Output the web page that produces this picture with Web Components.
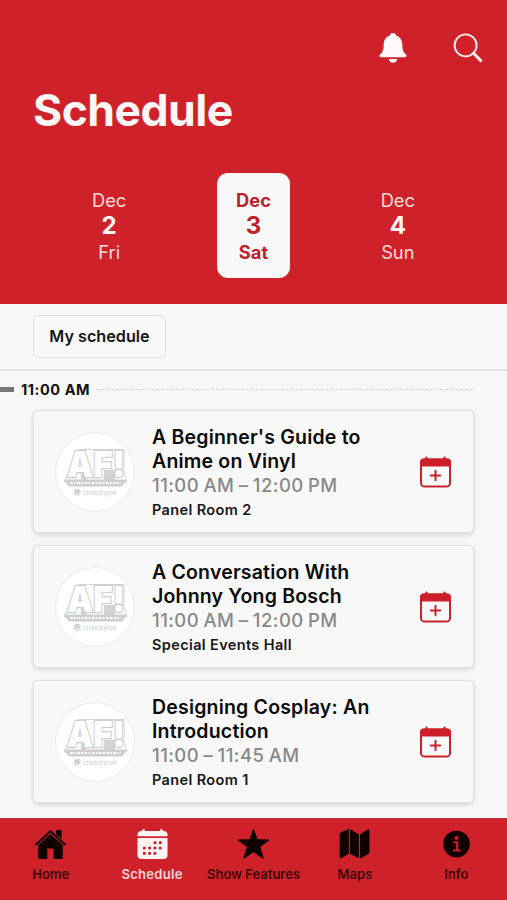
<!DOCTYPE html>
<html lang="en">
<head>
<meta charset="utf-8">
<meta name="viewport" content="width=device-width, initial-scale=1">
<title>Schedule</title>
<style>
  body {
    margin: 0;
    background: #f7f7f7;
    font-family: Inter, "Liberation Sans", sans-serif;
  }
</style>
</head>
<body>
<schedule-app>
  <app-header slot="header" label="Schedule">
    <day-tab month="Dec" date="2" day="Fri"></day-tab>
    <day-tab month="Dec" date="3" day="Sat" selected></day-tab>
    <day-tab month="Dec" date="4" day="Sun"></day-tab>
  </app-header>
  <filter-bar slot="filter">My schedule</filter-bar>
  <time-divider>11:00 AM</time-divider>
  <session-card>
    <span slot="title">A Beginner's Guide to<br>Anime on Vinyl</span>
    <span slot="time">11:00 AM – 12:00 PM</span>
    <span slot="room">Panel Room 2</span>
  </session-card>
  <session-card>
    <span slot="title">A Conversation With<br>Johnny Yong Bosch</span>
    <span slot="time">11:00 AM – 12:00 PM</span>
    <span slot="room">Special Events Hall</span>
  </session-card>
  <session-card>
    <span slot="title">Designing Cosplay: An<br>Introduction</span>
    <span slot="time">11:00 – 11:45 AM</span>
    <span slot="room">Panel Room 1</span>
  </session-card>
  <tab-bar slot="footer">
    <tab-item icon="home">Home</tab-item>
    <tab-item icon="schedule" selected>Schedule</tab-item>
    <tab-item icon="star">Show Features</tab-item>
    <tab-item icon="map">Maps</tab-item>
    <tab-item icon="info">Info</tab-item>
  </tab-bar>
</schedule-app>

<script>
const attach = (element, html) => {
  const template = document.createElement('template');
  template.innerHTML = html;
  element.attachShadow({ mode: 'open' }).appendChild(template.content.cloneNode(true));
  return element.shadowRoot;
};

class ScheduleApp extends HTMLElement {
  constructor() {
    super();
    attach(this, `
      <style>
        :host {
          display: flex;
          flex-direction: column;
          height: 100vh;
          overflow: hidden;
        }

        main {
          display: flex;
          flex: 1;
          flex-direction: column;
          gap: 12px;
          min-height: 0;
          overflow: hidden;
        }
      </style>
      <slot name="header"></slot>
      <slot name="filter"></slot>
      <main><slot></slot></main>
      <slot name="footer"></slot>
    `);
  }
}

class AppHeader extends HTMLElement {
  constructor() {
    super();
    const root = attach(this, `
      <style>
        :host {
          background: #cf2129;
          box-sizing: border-box;
          color: #fff6f6;
          display: flex;
          flex: none;
          flex-direction: column;
          height: 304px;
          padding-top: 28px;
        }

        .actions {
          display: flex;
          gap: 35px;
          height: 40px;
          justify-content: flex-end;
          padding-right: 19px;
        }

        h1 {
          font-size: 44.5px;
          font-weight: 700;
          letter-spacing: -0.5px;
          line-height: 52px;
          margin: 16px 0 0 33px;
        }

        nav {
          display: flex;
          margin-top: 37px;
          padding: 0 37px;
        }
      </style>
      <div class="actions">
        <svg width="40" height="40" viewBox="0 0 40 40" fill="#fff9f9">
          <path d="M20 5C18.2 5 17 6.1 17 7.4C12.9 8.7 10.8 12 10.7 16C10.6 22.5 9.5 24.4 7 26.6C6 27.6 6.5 29.3 8 29.3H32C33.5 29.3 34 27.6 33 26.6C30.5 24.4 29.4 22.5 29.3 16C29.2 12 27.1 8.7 23 7.4C23 6.1 21.8 5 20 5Z"/>
          <path d="M15.8 31H24.2C23.4 33.7 22 34.8 20 34.8S16.6 33.7 15.8 31Z"/>
        </svg>
        <svg width="40" height="40" viewBox="0 0 40 40" fill="none" stroke="#ffeeee" stroke-linecap="round">
          <circle cx="17.6" cy="17.4" r="11" stroke-width="1.9"/>
          <path d="M25.5 25.3L32.8 32.6" stroke-width="3"/>
        </svg>
      </div>
      <h1></h1>
      <nav><slot></slot></nav>
    `);
    root.querySelector('h1').textContent = this.getAttribute('label');
  }
}

class DayTab extends HTMLElement {
  constructor() {
    super();
    const root = attach(this, `
      <style>
        :host {
          display: flex;
          flex: 1;
          justify-content: center;
        }

        .day {
          align-items: center;
          border-radius: 11px;
          box-sizing: border-box;
          color: #ffdede;
          display: flex;
          flex-direction: column;
          font-size: 18.3px;
          height: 105px;
          line-height: 26px;
          padding-top: 14px;
          width: 73px;
        }

        .date {
          color: #fff6f6;
          font-size: 24px;
          font-weight: 700;
        }

        :host([selected]) .day {
          background: #f8f8f8;
          color: #bd222b;
          font-weight: 700;
        }

        :host([selected]) .date {
          color: inherit;
        }
      </style>
      <div class="day">
        <span class="month"></span>
        <span class="date"></span>
        <span class="weekday"></span>
      </div>
    `);
    root.querySelector('.month').textContent = this.getAttribute('month');
    root.querySelector('.date').textContent = this.getAttribute('date');
    root.querySelector('.weekday').textContent = this.getAttribute('day');
  }
}

class FilterBar extends HTMLElement {
  constructor() {
    super();
    attach(this, `
      <style>
        :host {
          border-bottom: 2px solid #e5e5e5;
          box-sizing: border-box;
          display: block;
          flex: none;
          height: 67px;
          padding: 11px 33px;
        }

        button {
          background: #f9f9f9;
          border: 1px solid #dfdfdf;
          border-radius: 7px;
          box-sizing: border-box;
          color: #161616;
          display: block;
          font: 600 16.2px/24px Inter, sans-serif;
          height: 43px;
          padding: 0 0 1px;
          width: 133px;
        }
      </style>
      <button><slot></slot></button>
    `);
  }
}

class TimeDivider extends HTMLElement {
  constructor() {
    super();
    attach(this, `
      <style>
        :host {
          align-items: center;
          color: #111;
          display: flex;
          flex: none;
          font-size: 14.5px;
          font-weight: 700;
          height: 27px;
          letter-spacing: .55px;
          line-height: 20px;
          margin: 5px 0 -5px;
          padding-right: 34px;
        }

        .marker {
          background: #777;
          height: 5px;
          margin-right: 7px;
          width: 14px;
        }

        .rule {
          border-top: 1px dashed #d3d3d3;
          flex: 1;
          margin-left: 6px;
        }
      </style>
      <span class="marker"></span>
      <slot></slot>
      <span class="rule"></span>
    `);
  }
}

class EventLogo extends HTMLElement {
  constructor() {
    super();
    attach(this, `
      <style>
        :host {
          background: #fff;
          border: 1px solid #ebebeb;
          border-radius: 50%;
          box-sizing: border-box;
          display: block;
          height: 80px;
          overflow: hidden;
          width: 80px;
        }

        svg {
          display: block;
          margin: -1px;
        }

        text {
          font-family: Inter, sans-serif;
        }
      </style>
      <svg width="80" height="80" viewBox="0 0 80 80">
        <path d="M24 17.5H69V40L72 50H9L15 38Z" fill="#fff" stroke="#d6d6d6"/>
        <path d="M49 38H60V48H49ZM26 41H31V48H26Z" fill="#d3d3d3"/>
        <text x="12" y="45" font-size="36" font-weight="900" fill="#fff" stroke="#cecece" stroke-width="2.4" paint-order="stroke" textLength="58" lengthAdjust="spacingAndGlyphs">AF!</text>
        <path d="M8.5 47.5H72L67 54.5H14Z" fill="#cecece"/>
        <path d="M15 51H66" stroke="#fff" stroke-width="1.8" stroke-dasharray="3 1.2 1.6 1.4"/>
        <circle cx="22.5" cy="60.2" r="3.4" fill="#cfcfcf"/>
        <path d="M21 60.3A2.3 2.3 0 1 0 24 58.1" fill="none" stroke="#fff" stroke-width=".8"/>
        <text x="28" y="62.5" font-size="6.5" fill="#c9c9c9" textLength="33" lengthAdjust="spacingAndGlyphs">crunchyroll</text>
      </svg>
    `);
  }
}

class SessionCard extends HTMLElement {
  constructor() {
    super();
    attach(this, `
      <style>
        :host {
          align-items: center;
          background: #f8f8f8;
          border: 1px solid #dedede;
          border-radius: 5px;
          box-shadow: 0 2px 5px rgba(0, 0, 0, .13);
          box-sizing: border-box;
          display: flex;
          flex: none;
          height: 123px;
          margin: 0 33px;
          padding: 0 22px 0 21px;
        }

        .details {
          display: flex;
          flex: 1;
          flex-direction: column;
          margin-left: 17px;
          padding-top: 1px;
          white-space: nowrap;
        }

        .title {
          color: #0b0b0b;
          font-size: 19.5px;
          font-weight: 600;
          letter-spacing: .19px;
          line-height: 24px;
        }

        .time {
          color: #888;
          font-size: 18.5px;
          font-weight: 500;
          letter-spacing: .45px;
          line-height: 24px;
          word-spacing: -1px;
        }

        .room {
          color: #171717;
          font-size: 14.5px;
          font-weight: 600;
          letter-spacing: .37px;
          line-height: 20px;
          margin-top: 3px;
        }
      </style>
      <event-logo></event-logo>
      <div class="details">
        <div class="title"><slot name="title"></slot></div>
        <div class="time"><slot name="time"></slot></div>
        <div class="room"><slot name="room"></slot></div>
      </div>
      <svg width="32" height="32" viewBox="0 0 32 32">
        <rect x="2" y="3.5" width="29" height="27" rx="3.6" fill="none" stroke="#c7222b" stroke-width="2"/>
        <path d="M1 10.5V6A3.5 3.5 0 0 1 4.5 2.5H28.5A3.5 3.5 0 0 1 32 6V10.5Z" fill="#cd1f29"/>
        <path d="M7.5 3V1.5M25.5 3V1.5" stroke="#c7222b" stroke-width="2.2" stroke-linecap="round"/>
        <path d="M16.5 14.8V24.2M11.8 19.5H21.2" stroke="#c7222b" stroke-width="2" stroke-linecap="round"/>
      </svg>
    `);
  }
}

class TabBar extends HTMLElement {
  constructor() {
    super();
    attach(this, `
      <style>
        :host {
          background: #cf2129;
          border-top: 1px solid #b9343b;
          box-sizing: border-box;
          display: flex;
          flex: none;
          height: 82px;
        }
      </style>
      <slot></slot>
    `);
  }
}

const tabIcons = {
  home: `
    <path d="M2 17.4L16.5 4.3L31 17.4" fill="none" stroke="currentColor" stroke-width="2" stroke-linecap="round" stroke-linejoin="round"/>
    <path d="M22 4Q22 3 23 3H26.5Q27.5 3 27.5 4V12L22 7.2Z"/>
    <path d="M4.2 18L16.5 6.9L28.8 18V30.5Q28.8 32 27.3 32H19.7V21.5H13.3V32H5.7Q4.2 32 4.2 30.5Z"/>`,
  schedule: `
    <path d="M1.5 9.2V8A4 4 0 0 1 5.5 4H6V3.5A1.5 1.5 0 0 1 9 3.5V4H24V3.5A1.5 1.5 0 0 1 27 3.5V4H27.5A4 4 0 0 1 31.5 8V9.2Z"/>
    <path d="M1.5 11H31.5V28A4 4 0 0 1 27.5 32H5.5A4 4 0 0 1 1.5 28Z"/>
    <path d="M19 15.7H26M8.3 21H26M8.3 26.3H21" stroke="#cf2129" stroke-width="3.2" stroke-dasharray="0 5.3" stroke-linecap="round"/>`,
  star: '<path d="M16.5 2L20.2 12.7L32 13L22.7 19.8L26.3 31.5L16.5 24.7L6.7 31.5L10.3 19.8L1 13L12.8 12.7Z" stroke="currentColor" stroke-linejoin="round"/>',
  map: `
    <path d="M1.7 7.4Q1.7 6.2 2.8 5.4L10.8 1.8V26.7L3.7 31Q1.7 32 1.7 29.8Z"/>
    <path d="M11.9 1.9L20.9 7.4V31.2L11.9 26.8Z"/>
    <path d="M22 7.4L29.6 2.4Q31.4 1.6 31.4 3.6V25.2Q31.4 26.4 30.4 27.1L22 31.4Z"/>`,
  info: `
    <circle cx="16.5" cy="17" r="13.3"/>
    <circle cx="16.5" cy="11" r="2" fill="#cf2129"/>
    <path d="M13.2 15.2H17.2V22.6M13 23.5H20.5" fill="none" stroke="#cf2129" stroke-width="2.1"/>`
};

class TabItem extends HTMLElement {
  constructor() {
    super();
    attach(this, `
      <style>
        :host {
          align-items: center;
          color: #100000;
          display: flex;
          flex: 1 1 0;
          flex-direction: column;
          font-size: 13px;
          font-weight: 600;
          line-height: 18px;
          min-width: 0;
          padding-top: 8px;
          white-space: nowrap;
        }

        :host([selected]) {
          color: #fff4f4;
          letter-spacing: .3px;
        }

        svg {
          fill: currentColor;
          height: 34px;
          width: 33px;
        }

        span {
          color: #3c060a;
          margin-top: 4px;
        }

        :host([selected]) span {
          color: #ffd6d8;
        }
      </style>
      <svg viewBox="0 0 33 34">${tabIcons[this.getAttribute('icon')]}</svg>
      <span><slot></slot></span>
    `);
  }
}

window.customElements.define('event-logo', EventLogo);
window.customElements.define('schedule-app', ScheduleApp);
window.customElements.define('app-header', AppHeader);
window.customElements.define('day-tab', DayTab);
window.customElements.define('filter-bar', FilterBar);
window.customElements.define('time-divider', TimeDivider);
window.customElements.define('session-card', SessionCard);
window.customElements.define('tab-bar', TabBar);
window.customElements.define('tab-item', TabItem);
</script>
</body>
</html>
